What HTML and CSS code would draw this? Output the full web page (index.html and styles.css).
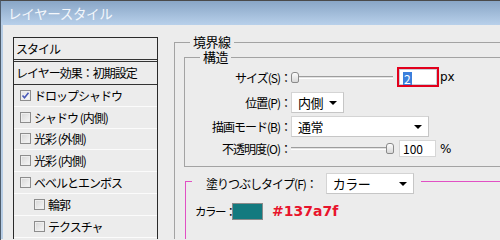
FILE: index.html
```html
<!DOCTYPE html>
<html lang="ja">
<head>
    <meta charset="UTF-8">
    <title>レイヤースタイル</title>
    <link rel="stylesheet" href="styles.css">
</head>
<body>
    <div class="window">
        <div class="titlebar">レイヤースタイル</div>
        <div class="main">
            <div class="styles-list">
                <div class="list-head">スタイル</div>
                <div class="list-default">レイヤー効果：初期設定</div>
                <div class="list-item"><span class="cb checked"><svg width="9" height="9" viewBox="0 0 9 9"><path d="M1.5 4.5 L3.5 6.8 L7.5 1.8" fill="none" stroke="#4a5ab8" stroke-width="1.6"/></svg></span>ドロップシャドウ</div>
                <div class="list-item"><span class="cb"></span>シャドウ (内側)</div>
                <div class="list-item"><span class="cb"></span>光彩 (外側)</div>
                <div class="list-item"><span class="cb"></span>光彩 (内側)</div>
                <div class="list-item"><span class="cb"></span>ベベルとエンボス</div>
                <div class="list-item sub"><span class="cb"></span>輪郭</div>
                <div class="list-item sub"><span class="cb"></span>テクスチャ</div>
            </div>

            <div class="settings">
                <fieldset class="group">
                    <legend>境界線</legend>
                    <fieldset class="structure">
                        <legend>構造</legend>
                        <div class="row row-size">
                            <span class="label">サイズ(S)：</span>
                            <span class="slider short"><span class="thumb"></span><span class="track"></span></span>
                            <span class="num-input focused"><span class="sel">2</span></span>
                            <span class="unit">px</span>
                        </div>
                        <div class="row row-pos">
                            <span class="label">位置(P)：</span>
                            <span class="select small">内側<span class="arrow"></span></span>
                        </div>
                        <div class="row row-mode">
                            <span class="label">描画モード(B)：</span>
                            <span class="select wide">通常<span class="arrow"></span></span>
                        </div>
                        <div class="row row-opacity">
                            <span class="label">不透明度(O)：</span>
                            <span class="slider"><span class="track"></span><span class="thumb"></span></span>
                            <span class="num-input">100</span>
                            <span class="unit">%</span>
                        </div>
                    </fieldset>

                    <fieldset class="fill">
                        <legend>
                            <span class="fill-label">塗りつぶしタイプ(F)：</span>
                            <span class="select fill-select">カラー<span class="arrow"></span></span>
                        </legend>
                        <div class="color-row">
                            <span class="color-label">カラー：</span>
                            <span class="swatch"></span>
                            <span class="hex">#137a7f</span>
                        </div>
                    </fieldset>
                </fieldset>
            </div>
        </div>
    </div>
</body>
</html>
```

FILE: styles.css
```css
body {
    margin: 0;
    width: 500px;
    height: 240px;
    overflow: hidden;
    background-color: #ececec;
    font-family: "Noto Sans CJK JP", "DejaVu Sans", sans-serif;
    font-size: 12px;
    color: #000;
}
.window {
    border-top: 1px solid #4a4a4a;
    border-left: 1px solid #4f5d6c;
    height: 239px;
    overflow: hidden;
}
.titlebar {
    height: 24px;
    line-height: 24px;
    padding-left: 7px;
    background: linear-gradient(#89a6c6, #b8d0ea);
    color: #f4f7fb;
    font-size: 13.5px;
    letter-spacing: -0.3px;
}
.main {
    display: flex;
    align-items: flex-start;
    box-shadow: inset 2px 0 #b7cde5;
    height: 214px;
    overflow: hidden;
}

/* left list */
.styles-list {
    flex: none;
    width: 145px;
    height: 214px;
    box-sizing: border-box;
    margin: 12px 0 0 12px;
    border: 1px solid #2a2a2a;
    border-bottom: none;
    letter-spacing: -1px;
}
.list-head {
    height: 21px;
    line-height: 21px;
    padding-left: 2px;
    border-bottom: 3px double #333;
}
.list-default {
    height: 22px;
    line-height: 22px;
    padding-left: 2px;
    border-bottom: 1px solid #333;
}
.list-item {
    display: flex;
    align-items: center;
    height: 20.8px;
    padding-left: 6px;
    border-bottom: 1px solid #fbfbfb;
}
.list-item.sub {
    padding-left: 20px;
}
.cb {
    width: 11px;
    height: 11px;
    box-sizing: border-box;
    margin-right: 3px;
    border: 1px solid #8d8d8d;
    background: linear-gradient(135deg, #d6d6d6, #f7f7f7);
    box-shadow: inset 0 0 0 1px #eeeeee;
    display: flex;
    align-items: center;
    justify-content: center;
}
.cb.checked {
    background: linear-gradient(135deg, #e4e4e4, #fafafa);
}

/* right settings */
.settings {
    flex: none;
    width: 340px;
    margin-left: 16px;
}
fieldset {
    margin: 0;
    padding: 0;
    min-width: 0;
    border: 1px solid #a3a3a3;
    border-right: none;
}
legend {
    font-size: 13px;
    line-height: 14px;
    padding: 0 3px;
    letter-spacing: -0.5px;
}
.group {
    margin-top: 10px;
    height: 214px;
    border-bottom: none;
}
.group > legend {
    margin-left: 15px;
}
.structure {
    margin: 1px 0 0 9px;
    padding: 3px 0 9px 0;
}
.structure > legend {
    margin-left: 15px;
}
.row {
    display: flex;
    align-items: center;
}
.row-size { height: 20px; }
.row-pos { height: 21px; margin-top: 5px; }
.row-mode { height: 21px; margin-top: 3px; }
.row-opacity { height: 17px; margin-top: 3px; }
.label {
    width: 106px;
    flex: none;
    text-align: right;
    letter-spacing: -1px;
}
.slider {
    display: flex;
    align-items: center;
    width: 103px;
    height: 12px;
}
.slider.short {
    width: 102px;
}
.track {
    flex: 1;
    height: 3px;
    box-sizing: border-box;
    border-top: 1px solid #9d9d9d;
    border-bottom: 1px solid #fff;
    background: #e2e2e2;
}
.thumb {
    flex: none;
    width: 8px;
    height: 11px;
    box-sizing: border-box;
    border: 1px solid #8a8a8a;
    border-radius: 3px 3px 2px 2px;
    background: linear-gradient(#fdfdfd, #d8d8d8);
}
.num-input {
    width: 37px;
    height: 17px;
    box-sizing: border-box;
    margin-left: 5px;
    padding-left: 3px;
    line-height: 16px;
    background: #fff;
    border: 1px solid #d6d6d6;
    font-size: 12px;
}
.num-input.focused {
    width: 42px;
    height: 20px;
    margin-left: 4px;
    padding: 2px 0 0 4px;
    border: 2px solid #e2001c;
    box-shadow: inset 0 0 0 1px #c9ccd4;
}
.sel {
    display: inline-block;
    height: 13px;
    line-height: 13px;
    padding: 0 1px;
    background: #3b7fdc;
    color: #fff;
}
.unit {
    margin-left: 1px;
    font-size: 12px;
    font-family: "DejaVu Sans", sans-serif;
}
.row-opacity .unit {
    margin-left: 4px;
}
.select {
    position: relative;
    height: 21px;
    box-sizing: border-box;
    line-height: 19px;
    padding-left: 6px;
    background: #fff;
    border: 1px solid #d4d4d4;
    border-right-color: #c6c6c6;
    border-bottom-color: #c6c6c6;
    font-size: 13px;
    letter-spacing: -0.5px;
}
.select.small { width: 53px; }
.select.wide { width: 138px; }
.arrow {
    position: absolute;
    right: 6px;
    top: 8px;
    width: 0;
    height: 0;
    border-left: 4px solid transparent;
    border-right: 4px solid transparent;
    border-top: 4px solid #000;
}

/* fill section */
.fill {
    margin: 1px 0 0 10px;
    height: 80px;
    border-color: #e150c4;
    border-bottom: none;
}
.fill > legend {
    display: flex;
    align-items: center;
    margin-left: 6px;
    padding: 5px 7px 0 14px;
}
.fill-label {
    font-size: 12px;
    letter-spacing: -1px;
    margin-right: 9px;
}
.select.fill-select {
    width: 88px;
}
.color-row {
    display: flex;
    align-items: center;
    height: 22px;
    margin-top: 6px;
    padding-left: 9px;
}
.color-label {
    width: 37px;
    font-size: 11.5px;
    letter-spacing: -1.5px;
    white-space: nowrap;
}
.swatch {
    width: 31px;
    height: 17px;
    box-sizing: border-box;
    border: 1px solid #8a8a8a;
    background: #137a7f;
}
.hex {
    margin-left: 9px;
    color: #e8142c;
    font-family: "DejaVu Sans", sans-serif;
    font-weight: bold;
    font-size: 14px;
}
```
